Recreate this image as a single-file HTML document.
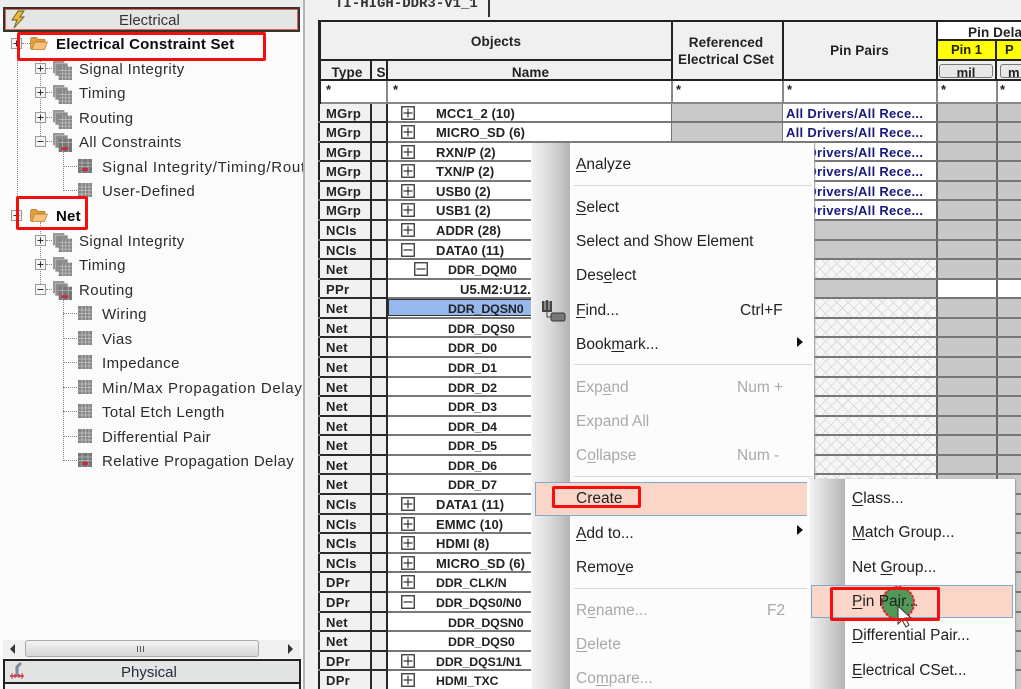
<!DOCTYPE html>
<html><head><meta charset="utf-8"><style>
html,body{margin:0;padding:0;width:1021px;height:689px;overflow:hidden}
body{background:#f0f0f0;font-family:"Liberation Sans",sans-serif;color:#222}
#w{position:relative;width:1021px;height:689px;overflow:hidden;background:#f1f1f1;filter:blur(.3px)}
.a{position:absolute}
svg{position:absolute;overflow:visible}
#left{position:absolute;left:0;top:0;width:303px;height:689px;overflow:hidden;background:#fbfbfb}
.t{position:absolute;white-space:nowrap;font-size:15px;letter-spacing:.4px;line-height:20px;color:#2c2c2c;margin-top:2px}
.bd{font-weight:bold;color:#0c0c0c;letter-spacing:.2px}
.dv{position:absolute;border-left:1px dotted #888}
.dh{position:absolute;border-top:1px dotted #888}
.red{position:absolute;border:3px solid #f40f0f;border-radius:2px;box-sizing:border-box}
#tbl{position:absolute;left:318px;top:20px;width:703px;height:669px;overflow:hidden;background:#f0f0f0;font-size:13px;font-weight:bold;color:#222}
#tbl .h{position:absolute;text-align:center;white-space:nowrap;letter-spacing:.1px;margin-top:1px}
.ln{position:absolute;background:#222}
#rows{position:absolute;left:0;top:83.5px;width:703px}
.r{position:relative;height:19.58px;box-sizing:border-box;border-bottom:2px solid #777;background:linear-gradient(90deg,#222 0 2px,#fff 2px 353px,#777 353px 354px,#c9c9c9 354px 464px,#777 464px 465px,#fff 465px)}
.r::before{content:"";position:absolute;left:465px;width:153px;top:0;bottom:0;background:#fff}
.r::after{content:"";position:absolute;left:618px;right:0;top:0;bottom:0;background:linear-gradient(90deg,#666 0 2px,#c8c8c8 2px 60px,#666 60px 62px,#c8c8c8 62px)}
.g::before{background:#c9c9c9}
.c::before{background-color:#f6f6f6;background-image:repeating-linear-gradient(45deg,#dcdcdc 0 1px,transparent 1px 8px),repeating-linear-gradient(-45deg,#dcdcdc 0 1px,transparent 1px 8px)}
.w::after{background:linear-gradient(90deg,#666 0 2px,#fff 2px 60px,#666 60px 62px,#fff 62px)}
.ty{position:absolute;left:2px;top:0;bottom:-2px;border-bottom:2px solid #2a2a2a;border-right:2px solid #2a2a2a;background:#f1f1f1;padding-left:6px;box-sizing:border-box;line-height:20px;letter-spacing:.3px;width:52px}
.s{position:absolute;left:54px;width:16px;top:0;bottom:-2px;border-bottom:2px solid #2a2a2a;border-right:2px solid #2a2a2a;background:#eee;box-sizing:border-box}
.n{position:absolute;top:0;line-height:20px;white-space:nowrap;font-weight:bold;letter-spacing:.08px}
.l1{left:118px}.l2{left:130px;font-size:12.4px;letter-spacing:-.1px}.l3{left:142px}
.nn{font-size:12.3px;letter-spacing:-.05px}
.pp{position:absolute;left:468px;top:0;line-height:20px;color:#1a1a7c;white-space:nowrap;letter-spacing:.28px}
.x{position:absolute;left:83px;top:2px;width:14px;height:14px}
.x2{left:96px}
#menu{position:absolute;left:531px;top:143px;width:283px;height:546px;background:#fcfcfc;box-shadow:1px 0 1px #999}
.sb{position:absolute;top:0;bottom:0;background:linear-gradient(90deg,#f2f2f2,#d8d8d8 50%,#b3b3b3 100%)}
.m{position:absolute;white-space:nowrap;font-size:15.5px;line-height:20px;color:#222;margin-top:1px}
.d{color:#a9a9a9}
.sep{position:absolute;height:1px;background:#d8d8d8}
.hl{position:absolute;background:#fbd5c8;border:1px solid #7fa9cf;box-sizing:border-box}
u{text-underline-offset:2px;text-decoration-thickness:1px}
.arr{position:absolute;width:0;height:0;border-left:6px solid #111;border-top:5px solid transparent;border-bottom:5px solid transparent}
</style></head><body><div id="w">
<svg width="0" height="0" style="position:absolute"><defs>
<symbol id="grid" viewBox="0 0 14 14"><rect width="14" height="14" fill="#858585"/><path d="M0 4h14M0 7.500h14M0 11h14M4 0v14M7.500 0v14M11 0v14" stroke="#c4c4c4" stroke-width=".8"/></symbol>
<symbol id="gridr" viewBox="0 0 14 14"><rect width="14" height="14" fill="#777"/><path d="M0 4h14M0 7.500h14M4 0v14M10 0v14" stroke="#bbb" stroke-width=".8"/><rect x="4" y="9" width="6" height="3" fill="#c0303a"/></symbol>
<symbol id="stack" viewBox="0 0 20 20"><rect x="0" y="0" width="12" height="13" fill="#999"/><rect x="2.500" y="2.500" width="13" height="13" fill="#8e8e8e" stroke="#ccc" stroke-width=".5"/><rect x="6" y="6" width="14" height="14" fill="#858585"/><path d="M6 10h14M6 13.500h14M6 17h14M10 6v14M13.500 6v14M17 6v14" stroke="#c4c4c4" stroke-width=".8"/></symbol>
<symbol id="stackr" viewBox="0 0 20 20"><rect x="0" y="0" width="12" height="13" fill="#999"/><rect x="2.500" y="2.500" width="13" height="13" fill="#8e8e8e" stroke="#ccc" stroke-width=".5"/><rect x="6" y="6" width="14" height="14" fill="#777"/><path d="M6 10h14M10 6v14M16 6v14" stroke="#bbb" stroke-width=".8"/><rect x="9" y="15" width="7" height="3" fill="#c0303a"/></symbol>
<symbol id="folder" viewBox="0 0 20 16"><path d="M1 3.500Q1 1.500 3 1.500H7L9 3.500H15Q16.500 3.500 16.500 5V6H6L3 14H2Q1 14 1 13Z" fill="#e0a040" stroke="#b57a30" stroke-width=".8"/><path d="M5.500 6.500H19L16 14.500H2.500Z" fill="#f5c27e" stroke="#c4833a" stroke-width=".8"/></symbol>
<symbol id="tp" viewBox="0 0 11 11"><rect x=".5" y=".5" width="10" height="10" fill="#f4f4f4" stroke="#9a9a9a"/><path d="M2.500 5.500h6M5.500 2.500v6" stroke="#333"/></symbol>
<symbol id="tm" viewBox="0 0 11 11"><rect x=".5" y=".5" width="10" height="10" fill="#f4f4f4" stroke="#9a9a9a"/><path d="M2.500 5.500h6" stroke="#333"/></symbol>
<symbol id="p" viewBox="0 0 14 14"><rect x=".75" y=".75" width="12.500" height="12.500" fill="#fff" stroke="#333" stroke-width="1.300"/><path d="M2.500 7h9M7 2.500v9" stroke="#333" stroke-width="1.200"/></symbol>
<symbol id="mn" viewBox="0 0 14 14"><rect x=".75" y=".75" width="12.500" height="12.500" fill="#fff" stroke="#333" stroke-width="1.300"/><path d="M2.500 7h9" stroke="#333" stroke-width="1.200"/></symbol>
</defs></svg>

<div id="left">
<div class="a" style="left:0;top:0;width:303px;height:8px;background:#ececec"></div>
<div class="a" style="left:3px;top:7px;width:297px;height:25px;box-sizing:border-box;border:2px solid #333;background:#e4e6e6"></div>
<div class="a" style="left:5px;top:9px;width:293px;height:21px;box-sizing:border-box;border:1px solid #e0654a"></div>
<svg style="left:11px;top:11px" width="14" height="17" viewBox="0 0 14 17"><path d="M7 0H13L9 6H13L3 17L6 9H1Z" fill="#e8b83c" stroke="#6d5a2a" stroke-width=".9"/></svg>
<div class="t" style="left:119px;top:9px;letter-spacing:0;color:#333">Electrical</div>

<div class="dv" style="left:17px;top:52px;height:158px"></div>
<div class="dv" style="left:40px;top:58px;height:78px"></div>
<div class="dv" style="left:63px;top:150px;height:41px"></div>
<div class="dv" style="left:40px;top:222px;height:62px"></div>
<div class="dv" style="left:63px;top:298px;height:163px"></div>
<div class="dh" style="left:22px;top:43px;height:0;width:8px"></div>
<div class="dh" style="left:46px;top:68px;width:6px"></div><div class="dh" style="left:46px;top:92px;width:6px"></div><div class="dh" style="left:46px;top:117px;width:6px"></div><div class="dh" style="left:46px;top:141px;width:6px"></div>
<div class="dh" style="left:63px;top:166px;width:14px"></div><div class="dh" style="left:63px;top:190px;width:14px"></div>
<div class="dh" style="left:46px;top:240px;width:6px"></div><div class="dh" style="left:46px;top:264px;width:6px"></div><div class="dh" style="left:46px;top:289px;width:6px"></div>
<div class="dh" style="left:63px;top:313px;width:14px"></div><div class="dh" style="left:63px;top:338px;width:14px"></div><div class="dh" style="left:63px;top:362px;width:14px"></div><div class="dh" style="left:63px;top:387px;width:14px"></div><div class="dh" style="left:63px;top:411px;width:14px"></div><div class="dh" style="left:63px;top:436px;width:14px"></div><div class="dh" style="left:63px;top:460px;width:14px"></div>

<svg style="left:11px;top:38px" width="11" height="11"><use href="#tp"/></svg>
<svg style="left:29px;top:36px" width="20" height="15"><use href="#folder"/></svg>
<div class="t bd" style="left:56px;top:33px">Electrical Constraint Set</div>
<svg style="left:35px;top:63px" width="11" height="11"><use href="#tp"/></svg><svg style="left:53px;top:61px" width="19" height="19"><use href="#stack"/></svg><div class="t" style="left:79px;top:58px">Signal Integrity</div>
<svg style="left:35px;top:87px" width="11" height="11"><use href="#tp"/></svg><svg style="left:53px;top:85px" width="19" height="19"><use href="#stack"/></svg><div class="t" style="left:79px;top:82px">Timing</div>
<svg style="left:35px;top:112px" width="11" height="11"><use href="#tp"/></svg><svg style="left:53px;top:110px" width="19" height="19"><use href="#stack"/></svg><div class="t" style="left:79px;top:107px">Routing</div>
<svg style="left:35px;top:136px" width="11" height="11"><use href="#tm"/></svg><svg style="left:53px;top:133px" width="19" height="19"><use href="#stackr"/></svg><div class="t" style="left:79px;top:131px">All Constraints</div>
<svg style="left:78px;top:159px" width="14" height="14"><use href="#gridr"/></svg><div class="t" style="left:102px;top:156px;letter-spacing:.72px">Signal Integrity/Timing/Routing</div>
<svg style="left:78px;top:183px" width="14" height="14"><use href="#grid"/></svg><div class="t" style="left:102px;top:180px">User-Defined</div>

<svg style="left:11px;top:210px" width="11" height="11"><use href="#tp"/></svg>
<svg style="left:29px;top:208px" width="20" height="15"><use href="#folder"/></svg>
<div class="t bd" style="left:56px;top:205px">Net</div>
<svg style="left:35px;top:235px" width="11" height="11"><use href="#tp"/></svg><svg style="left:53px;top:233px" width="19" height="19"><use href="#stack"/></svg><div class="t" style="left:79px;top:230px">Signal Integrity</div>
<svg style="left:35px;top:259px" width="11" height="11"><use href="#tp"/></svg><svg style="left:53px;top:257px" width="19" height="19"><use href="#stack"/></svg><div class="t" style="left:79px;top:254px">Timing</div>
<svg style="left:35px;top:284px" width="11" height="11"><use href="#tm"/></svg><svg style="left:53px;top:281px" width="19" height="19"><use href="#stackr"/></svg><div class="t" style="left:79px;top:279px">Routing</div>
<svg style="left:78px;top:306px" width="14" height="14"><use href="#grid"/></svg><div class="t" style="left:102px;top:303px">Wiring</div>
<svg style="left:78px;top:331px" width="14" height="14"><use href="#grid"/></svg><div class="t" style="left:102px;top:328px">Vias</div>
<svg style="left:78px;top:355px" width="14" height="14"><use href="#grid"/></svg><div class="t" style="left:102px;top:352px">Impedance</div>
<svg style="left:78px;top:380px" width="14" height="14"><use href="#grid"/></svg><div class="t" style="left:102px;top:377px;letter-spacing:.65px">Min/Max Propagation Delay</div>
<svg style="left:78px;top:404px" width="14" height="14"><use href="#grid"/></svg><div class="t" style="left:102px;top:401px">Total Etch Length</div>
<svg style="left:78px;top:429px" width="14" height="14"><use href="#grid"/></svg><div class="t" style="left:102px;top:426px">Differential Pair</div>
<svg style="left:78px;top:453px" width="14" height="14"><use href="#gridr"/></svg><div class="t" style="left:102px;top:450px">Relative Propagation Delay</div>

<div class="a" style="left:3px;top:640px;width:297px;height:18px;background:#f0f0f0"></div>
<div class="arr" style="left:10px;top:644px;border-left:0;border-right:5px solid #333"></div>
<div class="arr" style="left:288px;top:644px;border-left-color:#333;border-left-width:5px"></div>
<div class="a" style="left:25px;top:640px;width:234px;height:17px;box-sizing:border-box;border:1px solid #aaa;border-radius:3px;background:linear-gradient(#f4f4f4,#d6d6d6)"></div>
<div class="a" style="left:137px;top:646px;width:9px;height:6px;background:repeating-linear-gradient(90deg,#555 0 1px,transparent 1px 3px)"></div>
<div class="a" style="left:3px;top:659px;width:298px;height:25px;box-sizing:border-box;border:2px solid #222;background:#e3e5e5"></div>
<svg style="left:9px;top:662px" width="16" height="19" viewBox="0 0 16 19"><path d="M12 1L8 5V13" stroke="#7a8aa0" stroke-width="3" fill="none"/><path d="M1 14h14" stroke="#c03030" stroke-width="1.500"/><path d="M3 11v6M6 12v4M10 12v4M13 11v6" stroke="#c03030"/></svg>
<div class="t" style="left:121px;top:661px;letter-spacing:0;color:#2a2a3a">Physical</div>
<div class="a" style="left:3px;top:684px;width:298px;height:5px;background:#f0f0f0;border-left:2px solid #222;border-right:2px solid #222;box-sizing:border-box"></div>
</div>
<div class="a" style="left:303px;top:0;width:2px;height:689px;background:#b4b4b4"></div>

<div class="a" style="left:335px;top:-6px;font:bold 14px 'Liberation Mono',monospace;white-space:nowrap;color:#333;line-height:20px">TI-HIGH-DDR3-V1_1</div>
<div class="a" style="left:488px;top:0;width:2px;height:17px;background:#333"></div>

<div id="tbl">
<div class="a" style="left:0;top:0;width:703px;height:2px;background:#222"></div>
<div class="a" style="left:0;top:0;width:3px;height:669px;background:#222"></div>
<div class="h" style="left:3px;top:13px;width:350px;font-size:13.500px">Objects</div>
<div class="h" style="left:4px;top:44px;width:50px;font-size:13.500px">Type</div>
<div class="h" style="left:57px;top:44px;width:12px;overflow:hidden;font-size:13.500px">S</div>
<div class="h" style="left:70px;top:44px;width:285px;font-size:13.500px">Name</div>
<div class="h" style="left:354px;top:13px;width:108px;line-height:17px;font-size:13.500px">Referenced<br>Electrical CSet</div>
<div class="h" style="left:465px;top:22px;width:153px;font-size:13.500px">Pin Pairs</div>
<div class="a" style="left:620px;top:2px;width:83px;height:17px;background:#fff"></div>
<div class="h" style="left:650px;top:4px;font-size:13.500px">Pin Dela</div>
<div class="a" style="left:620px;top:21px;width:57px;height:18px;background:#ff0;text-align:center;line-height:18px">Pin 1</div>
<div class="a" style="left:679px;top:21px;width:24px;height:18px;background:#ff0;line-height:18px;padding-left:8px;box-sizing:border-box">P</div>
<div class="a" style="left:621px;top:44px;width:54px;height:14px;box-sizing:border-box;border:1px solid #777;border-radius:3px;background:#e8e8e8;text-align:center;line-height:15px;overflow:hidden">mil</div>
<div class="a" style="left:682px;top:44px;width:30px;height:14px;box-sizing:border-box;border:1px solid #777;border-radius:3px;background:#e8e8e8;line-height:15px;padding-left:7px;overflow:hidden">m</div>
<div class="ln" style="left:0;top:39px;width:353px;height:2px"></div>
<div class="ln" style="left:618px;top:19px;width:85px;height:2px"></div>
<div class="ln" style="left:618px;top:39px;width:85px;height:2px"></div>
<div class="ln" style="left:0;top:59px;width:703px;height:2px"></div>
<div class="ln" style="left:52px;top:41px;width:2px;height:18px"></div>
<div class="ln" style="left:68px;top:41px;width:2px;height:18px"></div>
<div class="ln" style="left:353px;top:0;width:2px;height:59px"></div>
<div class="ln" style="left:464px;top:0;width:2px;height:59px"></div>
<div class="ln" style="left:618px;top:0;width:2px;height:59px"></div>
<div class="ln" style="left:677px;top:21px;width:2px;height:38px"></div>
<div class="a" style="left:3px;top:61px;width:700px;height:23px;background:#fff"></div>
<div class="a" style="left:68px;top:61px;width:2px;height:23px;background:#888"></div>
<div class="a" style="left:353px;top:61px;width:2px;height:23px;background:#888"></div>
<div class="a" style="left:464px;top:61px;width:2px;height:23px;background:#888"></div>
<div class="a" style="left:618px;top:61px;width:2px;height:23px;background:#888"></div>
<div class="a" style="left:678px;top:61px;width:2px;height:23px;background:#888"></div>
<div class="a" style="left:8px;top:62px">*</div><div class="a" style="left:75px;top:62px">*</div><div class="a" style="left:358px;top:62px">*</div><div class="a" style="left:469px;top:62px">*</div><div class="a" style="left:623px;top:62px">*</div><div class="a" style="left:682px;top:62px">*</div>
<div class="a" style="left:3px;top:82px;width:700px;height:2px;background:#888"></div>

<div id="rows">
<div class="r"><b class="ty">MGrp</b><i class="s"></i><svg class="x" width="14" height="14"><use href="#p"/></svg><b class="n l1">MCC1_2 (10)</b><b class="pp">All Drivers/All Rece...</b></div>
<div class="r"><b class="ty">MGrp</b><i class="s"></i><svg class="x" width="14" height="14"><use href="#p"/></svg><b class="n l1">MICRO_SD (6)</b><b class="pp">All Drivers/All Rece...</b></div>
<div class="r"><b class="ty">MGrp</b><i class="s"></i><svg class="x" width="14" height="14"><use href="#p"/></svg><b class="n l1">RXN/P (2)</b><b class="pp">All Drivers/All Rece...</b></div>
<div class="r"><b class="ty">MGrp</b><i class="s"></i><svg class="x" width="14" height="14"><use href="#p"/></svg><b class="n l1">TXN/P (2)</b><b class="pp">All Drivers/All Rece...</b></div>
<div class="r"><b class="ty">MGrp</b><i class="s"></i><svg class="x" width="14" height="14"><use href="#p"/></svg><b class="n l1">USB0 (2)</b><b class="pp">All Drivers/All Rece...</b></div>
<div class="r"><b class="ty">MGrp</b><i class="s"></i><svg class="x" width="14" height="14"><use href="#p"/></svg><b class="n l1">USB1 (2)</b><b class="pp">All Drivers/All Rece...</b></div>
<div class="r g"><b class="ty">NCls</b><i class="s"></i><svg class="x" width="14" height="14"><use href="#p"/></svg><b class="n l1">ADDR (28)</b></div>
<div class="r g"><b class="ty">NCls</b><i class="s"></i><svg class="x" width="14" height="14"><use href="#mn"/></svg><b class="n l1">DATA0 (11)</b></div>
<div class="r c"><b class="ty">Net</b><i class="s"></i><svg class="x x2" width="14" height="14"><use href="#mn"/></svg><b class="n l2">DDR_DQM0</b></div>
<div class="r g w"><b class="ty">PPr</b><i class="s"></i><b class="n l3">U5.M2:U12.M2</b></div>
<div class="r c"><b class="ty">Net</b><i class="s"></i><b class="a" style="left:70px;top:0;width:213px;height:17px;background:#96b8ec;border:1px solid #333;box-sizing:border-box"></b><b class="n l2">DDR_DQSN0</b></div>
<div class="r c"><b class="ty">Net</b><i class="s"></i><b class="n l2">DDR_DQS0</b></div>
<div class="r c"><b class="ty">Net</b><i class="s"></i><b class="n l2">DDR_D0</b></div>
<div class="r c"><b class="ty">Net</b><i class="s"></i><b class="n l2">DDR_D1</b></div>
<div class="r c"><b class="ty">Net</b><i class="s"></i><b class="n l2">DDR_D2</b></div>
<div class="r c"><b class="ty">Net</b><i class="s"></i><b class="n l2">DDR_D3</b></div>
<div class="r c"><b class="ty">Net</b><i class="s"></i><b class="n l2">DDR_D4</b></div>
<div class="r c"><b class="ty">Net</b><i class="s"></i><b class="n l2">DDR_D5</b></div>
<div class="r c"><b class="ty">Net</b><i class="s"></i><b class="n l2">DDR_D6</b></div>
<div class="r c"><b class="ty">Net</b><i class="s"></i><b class="n l2">DDR_D7</b></div>
<div class="r g"><b class="ty">NCls</b><i class="s"></i><svg class="x" width="14" height="14"><use href="#p"/></svg><b class="n l1">DATA1 (11)</b></div>
<div class="r g"><b class="ty">NCls</b><i class="s"></i><svg class="x" width="14" height="14"><use href="#p"/></svg><b class="n l1">EMMC (10)</b></div>
<div class="r g"><b class="ty">NCls</b><i class="s"></i><svg class="x" width="14" height="14"><use href="#p"/></svg><b class="n l1">HDMI (8)</b></div>
<div class="r g"><b class="ty">NCls</b><i class="s"></i><svg class="x" width="14" height="14"><use href="#p"/></svg><b class="n l1">MICRO_SD (6)</b></div>
<div class="r g"><b class="ty">DPr</b><i class="s"></i><svg class="x" width="14" height="14"><use href="#p"/></svg><b class="n l1 nn">DDR_CLK/N</b></div>
<div class="r g"><b class="ty">DPr</b><i class="s"></i><svg class="x" width="14" height="14"><use href="#mn"/></svg><b class="n l1 nn">DDR_DQS0/N0</b></div>
<div class="r g"><b class="ty">Net</b><i class="s"></i><b class="n l2">DDR_DQSN0</b></div>
<div class="r g"><b class="ty">Net</b><i class="s"></i><b class="n l2">DDR_DQS0</b></div>
<div class="r g"><b class="ty">DPr</b><i class="s"></i><svg class="x" width="14" height="14"><use href="#p"/></svg><b class="n l1 nn">DDR_DQS1/N1</b></div>
<div class="r g"><b class="ty">DPr</b><i class="s"></i><svg class="x" width="14" height="14"><use href="#p"/></svg><b class="n l1 nn">HDMI_TXC</b></div>
</div>
</div>

<div id="menu">
<div class="sb" style="left:1px;width:38px"></div>
<svg style="left:10px;top:153px" width="26" height="27" viewBox="0 0 26 27"><path d="M2 5V15H10V5M6 4V14M10 8V14" stroke="#444" stroke-width="2" fill="#888"/><rect x="10" y="17" width="14" height="8" rx="2" fill="#777" stroke="#333"/><path d="M6 16V21H10" stroke="#444" fill="none"/></svg>
</div>
<div class="m" style="left:576px;top:154px"><u>A</u>nalyze</div>
<div class="sep" style="left:574px;top:185px;width:238px"></div>
<div class="m" style="left:576px;top:197px"><u>S</u>elect</div>
<div class="m" style="left:576px;top:231px">Select and Show Element</div>
<div class="m" style="left:576px;top:265px">Des<u>e</u>lect</div>
<div class="m" style="left:576px;top:300px"><u>F</u>ind...</div><div class="m" style="left:740px;top:300px">Ctrl+F</div>
<div class="m" style="left:576px;top:334px">Book<u>m</u>ark...</div><div class="arr" style="left:797px;top:337px"></div>
<div class="sep" style="left:574px;top:364px;width:238px"></div>
<div class="m d" style="left:576px;top:377px">Exp<u>a</u>nd</div><div class="m d" style="left:737px;top:377px">Num +</div>
<div class="m d" style="left:576px;top:411px">Expand All</div>
<div class="m d" style="left:576px;top:445px">C<u>o</u>llapse</div><div class="m d" style="left:737px;top:445px">Num -</div>
<div class="sep" style="left:574px;top:476px;width:238px"></div>
<div class="hl" style="left:535px;top:482px;width:273px;height:34px"></div>
<div class="m" style="left:576px;top:488px">Cr<u>e</u>ate</div>
<div class="m" style="left:576px;top:523px"><u>A</u>dd to...</div><div class="arr" style="left:797px;top:525px"></div>
<div class="m" style="left:576px;top:557px">Remo<u>v</u>e</div>
<div class="sep" style="left:574px;top:588px;width:238px"></div>
<div class="m d" style="left:576px;top:600px">R<u>e</u>name...</div><div class="m d" style="left:767px;top:600px">F2</div>
<div class="m d" style="left:576px;top:634px"><u>D</u>elete</div>
<div class="m d" style="left:576px;top:668px">Co<u>m</u>pare...</div>
<div class="red" style="left:552px;top:486px;width:89px;height:22px"></div>

<div class="a" style="left:807px;top:479px;width:208px;height:210px;background:#fcfcfc;box-shadow:1px 0 1px #999">
<div class="sb" style="left:3px;width:35px;background:linear-gradient(90deg,#f2f2f2,#d4d4d4 50%,#b5b5b5)"></div>
</div>
<div class="m" style="left:852px;top:488px"><u>C</u>lass...</div>
<div class="m" style="left:852px;top:522px"><u>M</u>atch Group...</div>
<div class="m" style="left:852px;top:557px">Net <u>G</u>roup...</div>
<div class="hl" style="left:811px;top:585px;width:202px;height:33px"></div>
<svg style="left:880px;top:585px" width="40" height="46" viewBox="0 0 40 46"><circle cx="18" cy="18" r="16" fill="#4f9a58" stroke="#d6242a" stroke-width="2" stroke-dasharray="3 1"/></svg>
<div class="m" style="left:852px;top:591px"><u>P</u>in Pair...</div>
<svg style="left:880px;top:585px" width="40" height="46" viewBox="0 0 40 46"><path d="M18 21V39L22 35L26 42L29 40L25 33L31 33Z" fill="#fff" stroke="#333" stroke-width="1"/></svg>
<div class="m" style="left:852px;top:625px"><u>D</u>ifferential Pair...</div>
<div class="m" style="left:852px;top:660px"><u>E</u>lectrical CSet...</div>
<div class="red" style="left:830px;top:587px;width:110px;height:34px"></div>
<div class="red" style="left:17px;top:32px;width:249px;height:29px"></div>
<div class="red" style="left:16px;top:196px;width:72px;height:34px"></div>
</div></body></html>
